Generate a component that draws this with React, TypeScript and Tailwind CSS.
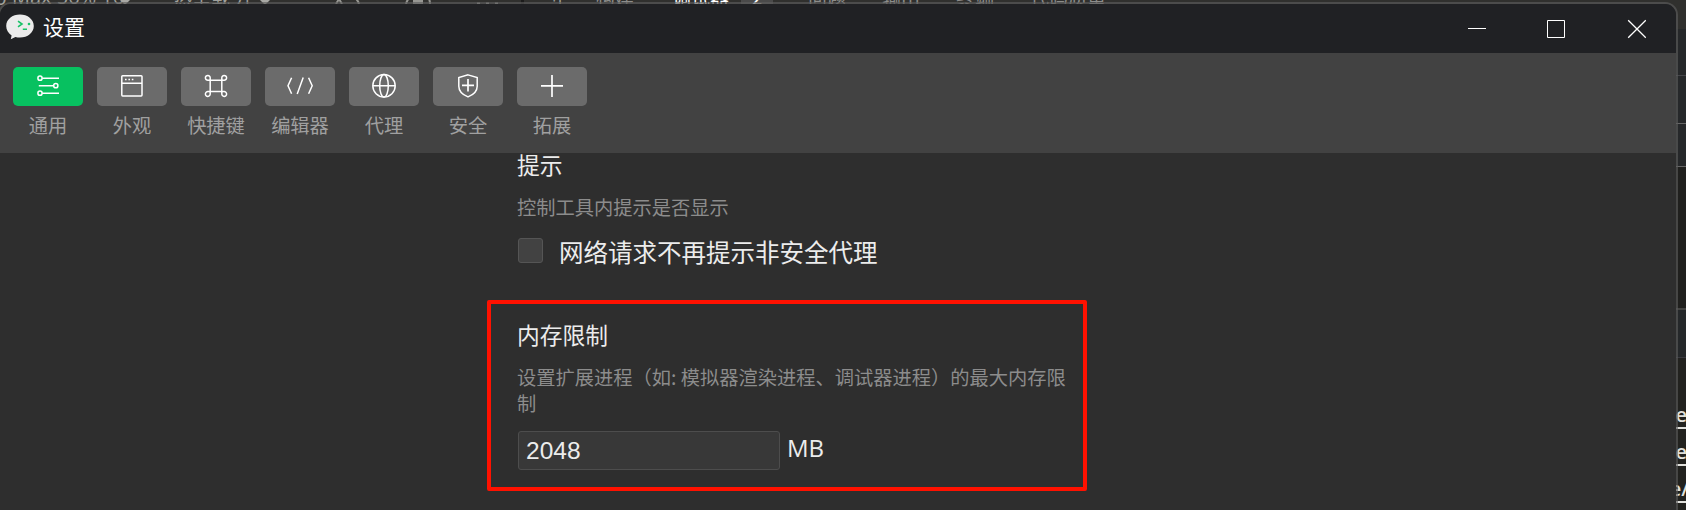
import type { ReactNode } from "react";

const Glyph = ({ children }: { children: ReactNode }) => (
  <svg
    width="26"
    height="26"
    viewBox="0 0 26 26"
    fill="none"
    stroke="#fff"
    strokeWidth="1.5"
    className="mb-px"
  >
    {children}
  </svg>
);

const tools: { label: string; icon: ReactNode }[] = [
  {
    label: "通用",
    icon: (
      <Glyph>
        <circle cx="5" cy="5.2" r="2.1" />
        <path d="M7.2 5.2H24M3.8 12.7H18.4M7.2 20.2H24" />
        <circle cx="20.8" cy="12.7" r="2.1" />
        <circle cx="5" cy="20.2" r="2.1" />
      </Glyph>
    ),
  },
  {
    label: "外观",
    icon: (
      <Glyph>
        <rect x="2.8" y="2.7" width="20.2" height="20.2" rx="0.8" />
        <path d="M2.8 10.2H23" />
        <path d="M6 6.5H7.6M9.4 6.5H11M12.8 6.5H14.4" strokeWidth="1.7" />
      </Glyph>
    ),
  },
  {
    label: "快捷键",
    icon: (
      <Glyph>
        <path d="M7.2 7.2H18.8V18.6H7.2Z" />
        <path d="M7.2 7.2H5A2.4 2.4 0 1 1 7.2 5ZM18.8 7.2V5A2.4 2.4 0 1 1 21 7.2ZM7.2 18.6V20.8A2.4 2.4 0 1 1 5 18.6ZM18.8 18.6H21A2.4 2.4 0 1 1 18.8 20.8Z" />
      </Glyph>
    ),
  },
  {
    label: "编辑器",
    icon: (
      <Glyph>
        <path d="M4.6 4.8L1 12.8L4.6 20.8M21.6 4.8L25.2 12.8L21.6 20.8M16.2 4.6L10.2 21" />
      </Glyph>
    ),
  },
  {
    label: "代理",
    icon: (
      <Glyph>
        <circle cx="13" cy="12.8" r="11.2" />
        <ellipse cx="13" cy="12.8" rx="4.3" ry="11.2" />
        <path d="M1.8 12.8H24.2" />
      </Glyph>
    ),
  },
  {
    label: "安全",
    icon: (
      <Glyph>
        <path d="M13 1.9L22.2 4.6V13.2C22.2 18.4 18.6 21.6 13 23.9C7.4 21.6 3.8 18.4 3.8 13.2V4.6Z" />
        <path d="M13 6V18.6M7 12.3H19" strokeWidth="1.7" />
      </Glyph>
    ),
  },
  {
    label: "拓展",
    icon: (
      <Glyph>
        <path d="M13 2V24M2 12.9H24" strokeWidth="1.7" />
      </Glyph>
    ),
  },
];

const Logo = () => (
  <svg width="28" height="26" viewBox="0 0 28 26" fill="none" className="mb-[3px]">
    <path
      d="M14 0.6C6.4 0.6 0.2 5.4 0.2 12C0.2 16 2.2 19.2 5.6 21.4L4.8 25.2L9.4 23C10.8 23.4 12.4 23.6 14 23.6C21.6 23.6 27.8 18.6 27.8 12C27.8 5.4 21.6 0.6 14 0.6Z"
      fill="#ebebeb"
    />
    <path d="M12 7.2L16 10L12 12.8M16.8 15.2H21" stroke="#18c267" strokeWidth="1.6" />
    <circle cx="23" cy="10" r="1.3" fill="#18c267" />
  </svg>
);

const Caret = () => (
  <svg width="10" height="5" viewBox="0 0 10 5" className="mt-[15px]">
    <path d="M0 0H10L5 5Z" fill="#a8a8a4" />
  </svg>
);

const moreTabs = ["问题", "输出", "终端", "代码质量"];

const Backdrop = () => (
  <div className="flex h-full flex-col bg-[#30302e]">
    <div className="flex h-[29px] shrink-0 overflow-hidden text-[19px] leading-[24px] whitespace-nowrap text-[#a0a09c]">
      <div className="-mt-[15px] flex">
        <span className="w-[12px] -ml-[5px] mr-[5px]">o</span>
        <span className="w-[108px] font-['Open_Sans',sans-serif] text-[20px]">Max 56% 16</span>
        <span className="w-[53px]"><Caret /></span>
        <span className="w-[87px]">热重载 开</span>
        <span className="w-[75px]"><Caret /></span>
        <svg width="186" height="22" viewBox="0 0 186 22" fill="none" stroke="#969692" strokeWidth="2">
          <path d="M1 19L4 14L7 19M19 12Q23 15 24 19M71 19Q72 15 75 12M93 12Q95 15 95 19" />
          <path d="M78 14H88V19H78Z" fill="#969692" stroke="none" />
          <path d="M142 18.5H145M151 18.5H154M160 18.5H163" />
        </svg>
        <span className="w-[75px] border-l-[3px] border-[#1c1c1c] pl-[20px]">刂</span>
        <span className="w-[76px] text-[#8c8c8a]">构建</span>
        <span className="w-[69px] text-white">调试器</span>
        <span className="mr-[35px] w-[32px] bg-[#4a4a4a] text-center text-white">2</span>
        {moreTabs.map((t) => (
          <span key={t} className="mr-[36px] text-[#8c8c8a]">
            {t}
          </span>
        ))}
      </div>
    </div>
    <div className="flex flex-1 justify-end">
      <div className="flex w-[10px] flex-col overflow-hidden">
        <div className="h-[47px] border-b border-[#45464a] bg-[#26282a]" />
        <div className="h-[48px] border-b border-[#666] bg-[#26282a]" />
        <div className="h-[43px] border-b border-[#666] bg-[#26282a]" />
        <div className="h-[143px] border-b-2 border-[#444442] bg-[#20201e]" />
        <div className="h-[48px] border-b border-[#3a3a40] bg-[#25282a]" />
        <div className="flex flex-1 flex-col items-end bg-[#22221f] pt-[38px] font-['Open_Sans',sans-serif] text-[20px] leading-[37px] font-semibold text-[#e0e0dc]">
          {["ne", "ge"].map((t) => (
            <span
              key={t}
              className="-mr-px h-[37px] underline decoration-2 underline-offset-[5px]"
            >
              {t}
            </span>
          ))}
          <span className="-mr-[3px] h-[37px] underline decoration-2 underline-offset-[5px]">
            e/
          </span>
        </div>
      </div>
    </div>
  </div>
);

export default function App() {
  return (
    <div className="relative h-[510px] w-[1686px] overflow-hidden bg-[#30302e] font-['Noto_Sans_CJK_SC',sans-serif]">
      <Backdrop />
      <div className="absolute top-[2px] -left-[2px] flex h-[520px] w-[1680px] flex-col overflow-hidden rounded-[13px] border-2 border-[#5c5c5c]/65 bg-[#2e2e2e] bg-clip-padding">
        <header className="flex h-[49px] shrink-0 items-center bg-[#202124] pl-[6px] text-[21px] text-white">
          <Logo />
          <span className="mb-[3px] ml-[9px]">设置</span>
          <div className="ml-auto flex pr-[30px]">
            <svg width="178" height="20" viewBox="0 0 178 20" fill="none" stroke="#fff">
              <path d="M0 9.5H18M79.5 1.5H96.5V18.5H79.5Z" />
              <path d="M160.2 1.2L177.8 18.8M177.8 1.2L160.2 18.8" strokeWidth="1.3" />
            </svg>
          </div>
        </header>
        <nav className="flex h-[100px] shrink-0 gap-[14px] bg-[#424242] pt-[14px] pl-[13px]">
          {tools.map((t, i) => (
            <button key={t.label} className="flex w-[70px] flex-col items-center">
              <span
                className={
                  i === 0
                    ? "flex h-[39px] w-full items-center justify-center rounded-[5px] bg-[#07c160]"
                    : "flex h-[39px] w-full items-center justify-center rounded-[5px] bg-[#6b6b6b]"
                }
              >
                {t.icon}
              </span>
              <span className="mt-[5px] text-[19.25px] leading-[28px] text-[#a0a0a0]">{t.label}</span>
            </button>
          ))}
        </nav>
        <main className="flex flex-1 flex-col pl-[487px] text-[#ececec]">
          <section className="h-[147px] pl-[30px]">
            <h2 className="-mt-px text-[22.75px] leading-[26px]">提示</h2>
            <p className="mt-[16px] text-[19.25px] leading-[26px] text-[#8c8c8c]">控制工具内提示是否显示</p>
            <label className="mt-[14px] flex items-center text-[24.5px] leading-[36px]">
              <span className="mr-[16px] mb-[3px] ml-px size-[25px] rounded-[3px] border border-[#555] bg-[#424242]" />
              网络请求不再提示非安全代理
            </label>
          </section>
          <section className="h-[191px] w-[600px] rounded-[2px] border-4 border-[#ff1100] pt-[18px] pl-[26px]">
            <h2 className="text-[22.75px] leading-[26px]">内存限制</h2>
            <p className="mt-[16px] w-[560px] text-[19.25px] leading-[26px] text-[#8c8c8c]">
              设置扩展进程（如: 模拟器渲染进程、调试器进程）的最大内存限制
            </p>
            <div className="mt-[15px] flex">
              <input
                defaultValue="2048"
                className="ml-[1px] h-[39px] w-[262px] rounded-[3px] border border-[#4d4d4d] bg-[#383838] px-[7px] font-['Liberation_Sans',sans-serif] text-[24.5px] outline-none"
              />
              <span className="ml-[7px] font-['Open_Sans',sans-serif] text-[24px] leading-[34px]">MB</span>
            </div>
          </section>
        </main>
      </div>
    </div>
  );
}
